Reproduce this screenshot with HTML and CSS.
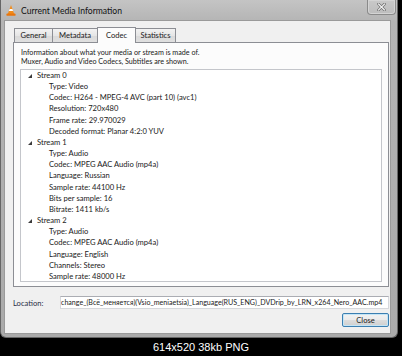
FILE: index.html
```html
<!DOCTYPE html>
<html lang="en">
<head>
    <meta charset="UTF-8">
    <title>Current Media Information</title>
    <link rel="stylesheet" href="styles.css">
</head>
<body>
    <div class="window">
        <div class="titlebar">
            <svg class="app-icon" width="10" height="11" viewBox="0 0 10 11">
                <polygon points="5,0 8.2,9 1.8,9" fill="#f28c1a"/>
                <polygon points="3.6,4 6.4,4 7.1,6 2.9,6" fill="#fff"/>
                <rect x="0.5" y="8.6" width="9" height="2.2" rx="0.6" fill="#e8760e"/>
            </svg>
            <span class="title">Current Media Information</span>
            <div class="close-btn">
                <svg width="9" height="8" viewBox="0 0 9 8">
                    <path d="M1.5 1 L7.5 7 M7.5 1 L1.5 7" stroke="#6f6f6f" stroke-width="2.6" stroke-linecap="square"/>
                    <path d="M1.5 1 L7.5 7 M7.5 1 L1.5 7" stroke="#f4f4f4" stroke-width="1.2" stroke-linecap="square"/>
                </svg>
            </div>
        </div>

        <div class="client">
            <div class="tabs">
                <div class="tab tab-general">General</div>
                <div class="tab tab-metadata">Metadata</div>
                <div class="tab tab-codec active">Codec</div>
                <div class="tab tab-stats">Statistics</div>
            </div>

            <div class="pane">
                <p class="intro">Information about what your media or stream is made of.<br>Muxer, Audio and Video Codecs, Subtitles are shown.</p>
                <div class="tree">
                    <div class="row stream"><span class="arrow"></span>Stream 0</div>
                    <div class="row item">Type: Video</div>
                    <div class="row item">Codec: H264 - MPEG-4 AVC (part 10) (avc1)</div>
                    <div class="row item">Resolution: 720x480</div>
                    <div class="row item">Frame rate: 29.970029</div>
                    <div class="row item">Decoded format: Planar 4:2:0 YUV</div>
                    <div class="row stream"><span class="arrow"></span>Stream 1</div>
                    <div class="row item">Type: Audio</div>
                    <div class="row item">Codec: MPEG AAC Audio (mp4a)</div>
                    <div class="row item">Language: Russian</div>
                    <div class="row item">Sample rate: 44100 Hz</div>
                    <div class="row item">Bits per sample: 16</div>
                    <div class="row item">Bitrate: 1411 kb/s</div>
                    <div class="row stream"><span class="arrow"></span>Stream 2</div>
                    <div class="row item">Type: Audio</div>
                    <div class="row item">Codec: MPEG AAC Audio (mp4a)</div>
                    <div class="row item">Language: English</div>
                    <div class="row item">Channels: Stereo</div>
                    <div class="row item">Sample rate: 48000 Hz</div>
                </div>
            </div>

            <div class="location">
                <span class="loc-label">Location:</span>
                <div class="loc-field"><span>change_(Всё_меняется)(Vsio_meniaetsia)_Language(RUS_ENG)_DVDrip_by_LRN_x264_Nero_AAC.mp4</span></div>
            </div>

            <div class="actions">
                <button class="close">Close</button>
            </div>
        </div>
    </div>
    <div class="caption">614x520 38kb PNG</div>
</body>
</html>
```

FILE: styles.css
```css
body {
    margin: 0;
    padding: 0;
    width: 402px;
    height: 356px;
    background: #000;
    font-family: 'Lato', 'Noto Sans', sans-serif;
    color: #1a1a1a;
    overflow: hidden;
}

.window {
    box-sizing: border-box;
    width: 398px;
    height: 338px;
    padding: 0 7px 4px 4px;
    border: 1px solid #666;
    border-top: none;
    border-radius: 0 0 6px 6px;
    background: linear-gradient(to bottom, #c4c4c4 0, #b4b4b4 22px, #aaaaaa 100%);
}

.titlebar {
    height: 21px;
    margin: 0 -7px 0 -4px;
    padding-left: 5px;
    display: flex;
    align-items: center;
}

.app-icon {
    display: block;
}

.title {
    margin-left: 5px;
    font-size: 8.6px;
    color: #111;
}

.close-btn {
    align-self: flex-start;
    margin-left: auto;
    margin-right: 1px;
    box-sizing: border-box;
    width: 29px;
    height: 15px;
    border: 1px solid #8a8a8a;
    border-top: none;
    border-radius: 0 0 4px 4px;
    background: linear-gradient(to bottom, #c9c9c9, #bdbdbd);
    box-shadow: inset 0 0 0 1px #d4d4d4;
    display: flex;
    align-items: center;
    justify-content: center;
}

.client {
    box-sizing: border-box;
    height: 312px;
    padding-top: 6px;
    background: #f0f0f0;
    box-shadow: 0 0 0 1px #9a9a9a;
}

.tabs {
    display: flex;
    align-items: flex-end;
    height: 15px;
    margin-left: 9px;
    position: relative;
    z-index: 1;
}

.tab {
    box-sizing: border-box;
    height: 14px;
    margin-left: -1px;
    border: 1px solid #8c8e94;
    border-bottom: none;
    background: linear-gradient(to bottom, #f2f2f2, #e6e6e6 50%, #d9d9d9 51%, #e0e0e0);
    font-size: 7.6px;
    line-height: 13px;
    text-align: center;
}

.tab-general { width: 39px; margin-left: 0; }
.tab-metadata { width: 46px; }
.tab-codec { width: 39px; }
.tab-stats { width: 41px; }

.tab.active {
    height: 16px;
    margin-bottom: -1px;
    background: #fcfcfc;
    line-height: 14px;
    position: relative;
    z-index: 2;
}

.pane {
    box-sizing: border-box;
    width: 376px;
    height: 245px;
    margin-left: 8px;
    padding: 5px 6px 0 6px;
    border: 1px solid #8c8e94;
    background: #fcfcfc;
}

.intro {
    margin: 0 0 0 1px;
    font-size: 7.2px;
    line-height: 9px;
    white-space: nowrap;
}

.tree {
    box-sizing: border-box;
    height: 213px;
    margin-top: 3px;
    border: 1px solid #c4c6cb;
    background: #fff;
    font-size: 7.6px;
}

.row {
    height: 11.17px;
    line-height: 11.17px;
    white-space: nowrap;
    display: flex;
    align-items: center;
}

.stream {
    padding-left: 7px;
}

.item {
    padding-left: 28px;
}

.arrow {
    width: 0;
    height: 0;
    margin-right: 5px;
    border-left: 4px solid transparent;
    border-bottom: 4px solid #3c3c3c;
}

.location {
    display: flex;
    align-items: center;
    height: 13px;
    margin-top: 9px;
    padding-left: 8px;
}

.loc-label {
    width: 47px;
    font-size: 7.6px;
    color: #2a2f45;
}

.loc-field {
    box-sizing: border-box;
    width: 329px;
    height: 13px;
    border: 1px solid #d6d8dc;
    border-top-color: #abadb3;
    background: #fff;
    display: flex;
    align-items: center;
    overflow: hidden;
    font-size: 7.1px;
    white-space: nowrap;
}

.close {
    box-sizing: border-box;
    width: 47px;
    height: 14px;
    padding: 0;
    border: 1px solid #3c7fb1;
    border-radius: 2px;
    background: linear-gradient(to bottom, #f2f2f2, #ebebeb 50%, #dddddd 51%, #cfcfcf);
    box-shadow: inset 0 0 0 1px #c4e5f6;
    font-family: 'Lato', 'Noto Sans', sans-serif;
    font-size: 7.6px;
    color: #1a1a1a;
}

.actions {
    display: flex;
    justify-content: flex-end;
    margin-top: 4px;
    padding-right: 1px;
}

.caption {
    height: 18px;
    line-height: 18px;
    text-align: center;
    color: #fff;
    font-family: 'Liberation Sans', Arial, sans-serif;
    font-size: 11px;
}
```
